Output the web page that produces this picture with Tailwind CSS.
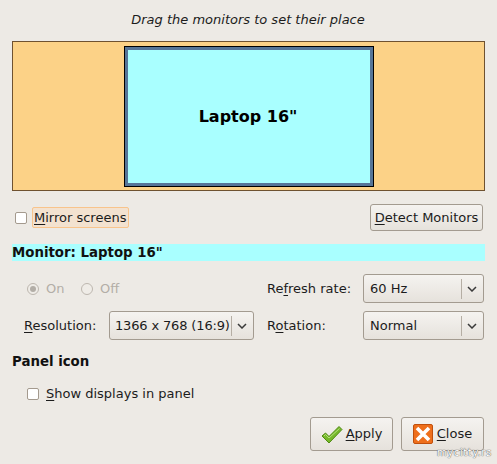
<!DOCTYPE html>
<html>
<head>
<meta charset="utf-8">
<script src="https://cdn.jsdelivr.net/npm/@tailwindcss/browser@4"></script>
</head>
<body class="m-0 bg-[#edeae5]">
<div class="relative w-[497px] h-[464px] overflow-hidden bg-[#edeae5] px-3 font-['DejaVu_Sans',sans-serif] text-[13px] text-[#1c1c1c]">
    <div class="h-[41px] flex items-center justify-center italic pb-[1px] pr-[1px]">Drag the monitors to set their place</div>

    <!-- monitor canvas -->
    <div class="w-[473px] h-[150px] border border-[#6f5230] bg-[#fcd287] flex justify-center pt-[4px] pl-[1px]">
        <div class="w-[250px] h-[141px] border border-black bg-[#a9ffff] flex items-center justify-center pr-[2px] shadow-[inset_0_0_0_3px_#567598] font-bold text-[16px] text-black">Laptop 16"</div>
    </div>

    <div class="mt-[13px] h-[27px] flex items-center justify-between pl-[3px] pr-[2px]">
        <div class="flex items-center">
            <input type="checkbox" class="appearance-none w-[12px] h-[12px] rounded-[2px] border border-[#a49a8e] bg-white">
            <span class="ml-[5px] h-[21px] w-[97px] flex items-center px-[1px] rounded-[2px] border border-[#f8c48c] bg-[#f3e2d0] whitespace-nowrap"><span><u class="underline-offset-2">M</u>irror screens</span></span>
        </div>
        <button class="w-[113px] h-[27px] rounded-[3px] border border-[#a39b90] bg-gradient-to-b from-[#f5f3f0] to-[#e6e2dc] text-center whitespace-nowrap"><u class="underline-offset-2">D</u>etect Monitors</button>
    </div>

    <div class="mt-[13px] h-[17px] w-[473px] bg-[#a9ffff] font-bold flex items-center text-[13.33px] text-[#111]">Monitor: Laptop 16"</div>

    <!-- settings -->
    <div class="mt-[13px] flex h-[29px] items-center">
        <div class="w-[255px] flex items-center pl-[15px] text-[#b3aea7]">
            <span class="w-[12px] h-[12px] rounded-full border border-[#bdb7af] bg-[#efece7] flex items-center justify-center"><span class="w-[6px] h-[6px] rounded-full bg-[#b3aea7]"></span></span>
            <span class="ml-[7px] w-[35px]">On</span>
            <span class="w-[12px] h-[12px] rounded-full border border-[#bdb7af] bg-[#efece7]"></span>
            <span class="ml-[7px]">Off</span>
        </div>
        <span class="w-[96px]">Re<u class="underline-offset-2">f</u>resh rate:</span>
        <div class="w-[121px] h-[29px] rounded-[3px] border border-[#a39b90] bg-gradient-to-b from-[#f5f3f0] to-[#e6e2dc] flex items-center">
            <span class="flex-1 min-w-0 pl-[6px]">60 Hz</span>
            <span class="shrink-0 w-[22px] h-[20px] border-l border-[#b5aea4] flex items-center justify-center pr-[2px]">
                <svg width="10" height="6" viewBox="0 0 10 6" fill="none" stroke="#3a3a3a" stroke-width="1.5"><path d="M1 1l4 4 4-4"/></svg>
            </span>
        </div>
    </div>

    <div class="mt-[8px] flex h-[29px] items-center">
        <div class="w-[255px] flex items-center pl-[12px]">
            <span class="w-[85px]"><u class="underline-offset-2">R</u>esolution:</span>
            <div class="w-[145px] h-[29px] rounded-[3px] border border-[#a39b90] bg-gradient-to-b from-[#f5f3f0] to-[#e6e2dc] flex items-center">
                <span class="flex-1 min-w-0 pl-[5px] whitespace-nowrap tracking-[-0.15px]">1366 x 768 (16:9)</span>
                <span class="shrink-0 w-[22px] h-[20px] border-l border-[#b5aea4] flex items-center justify-center pr-[2px]">
                    <svg width="10" height="6" viewBox="0 0 10 6" fill="none" stroke="#3a3a3a" stroke-width="1.5"><path d="M1 1l4 4 4-4"/></svg>
                </span>
            </div>
        </div>
        <span class="w-[96px]">R<u class="underline-offset-2">o</u>tation:</span>
        <div class="w-[121px] h-[29px] rounded-[3px] border border-[#a39b90] bg-gradient-to-b from-[#f5f3f0] to-[#e6e2dc] flex items-center">
            <span class="flex-1 min-w-0 pl-[6px]">Normal</span>
            <span class="shrink-0 w-[22px] h-[20px] border-l border-[#b5aea4] flex items-center justify-center pr-[2px]">
                <svg width="10" height="6" viewBox="0 0 10 6" fill="none" stroke="#3a3a3a" stroke-width="1.5"><path d="M1 1l4 4 4-4"/></svg>
            </span>
        </div>
    </div>

    <div class="mt-[13px] h-[17px] flex items-center font-bold text-[13.33px] text-[#111]">Panel icon</div>

    <div class="mt-[15px] h-[17px] flex items-center pl-[15px]">
        <input type="checkbox" class="appearance-none w-[12px] h-[12px] rounded-[2px] border border-[#a49a8e] bg-white">
        <span class="ml-[7px]"><u class="underline-offset-2">S</u>how displays in panel</span>
    </div>

    <div class="mt-[15px] flex justify-end gap-[8px] pr-[1px]">
        <button class="w-[83px] h-[34px] rounded-[3px] border border-[#a39b90] bg-gradient-to-b from-[#f5f3f0] to-[#e6e2dc] flex items-center justify-center gap-[3px]">
            <svg width="22" height="19" viewBox="0 0 22 19"><path d="M1 11l3.5-3 3.5 3.5L18 1.5l3 3L8 18z" fill="#76b82a" stroke="#4f8a12" stroke-width="1" stroke-linejoin="round"/><path d="M3 11l1.5-1.5 3.5 3.5L18.5 3.5" fill="none" stroke="#b4e27a" stroke-width="1"/></svg>
            <span><u class="underline-offset-2">A</u>pply</span>
        </button>
        <button class="w-[83px] h-[34px] rounded-[3px] border border-[#a39b90] bg-gradient-to-b from-[#f5f3f0] to-[#e6e2dc] flex items-center justify-center gap-[4px]">
            <svg width="20" height="20" viewBox="0 0 20 20"><rect x="0.5" y="0.5" width="19" height="19" rx="1.5" fill="#ee6f1c" stroke="#c04f0c"/><path d="M4 4l12 12M16 4L4 16" stroke="#fff" stroke-width="3.6"/></svg>
            <span><u class="underline-offset-2">C</u>lose</span>
        </button>
    </div>

    <span class="absolute left-[437px] top-[445px] text-[10px] tracking-[0.6px] text-white [text-shadow:0_0_1px_#555,0_0_1px_#555]">mycitty.rs</span>
</div>
</body>
</html>
